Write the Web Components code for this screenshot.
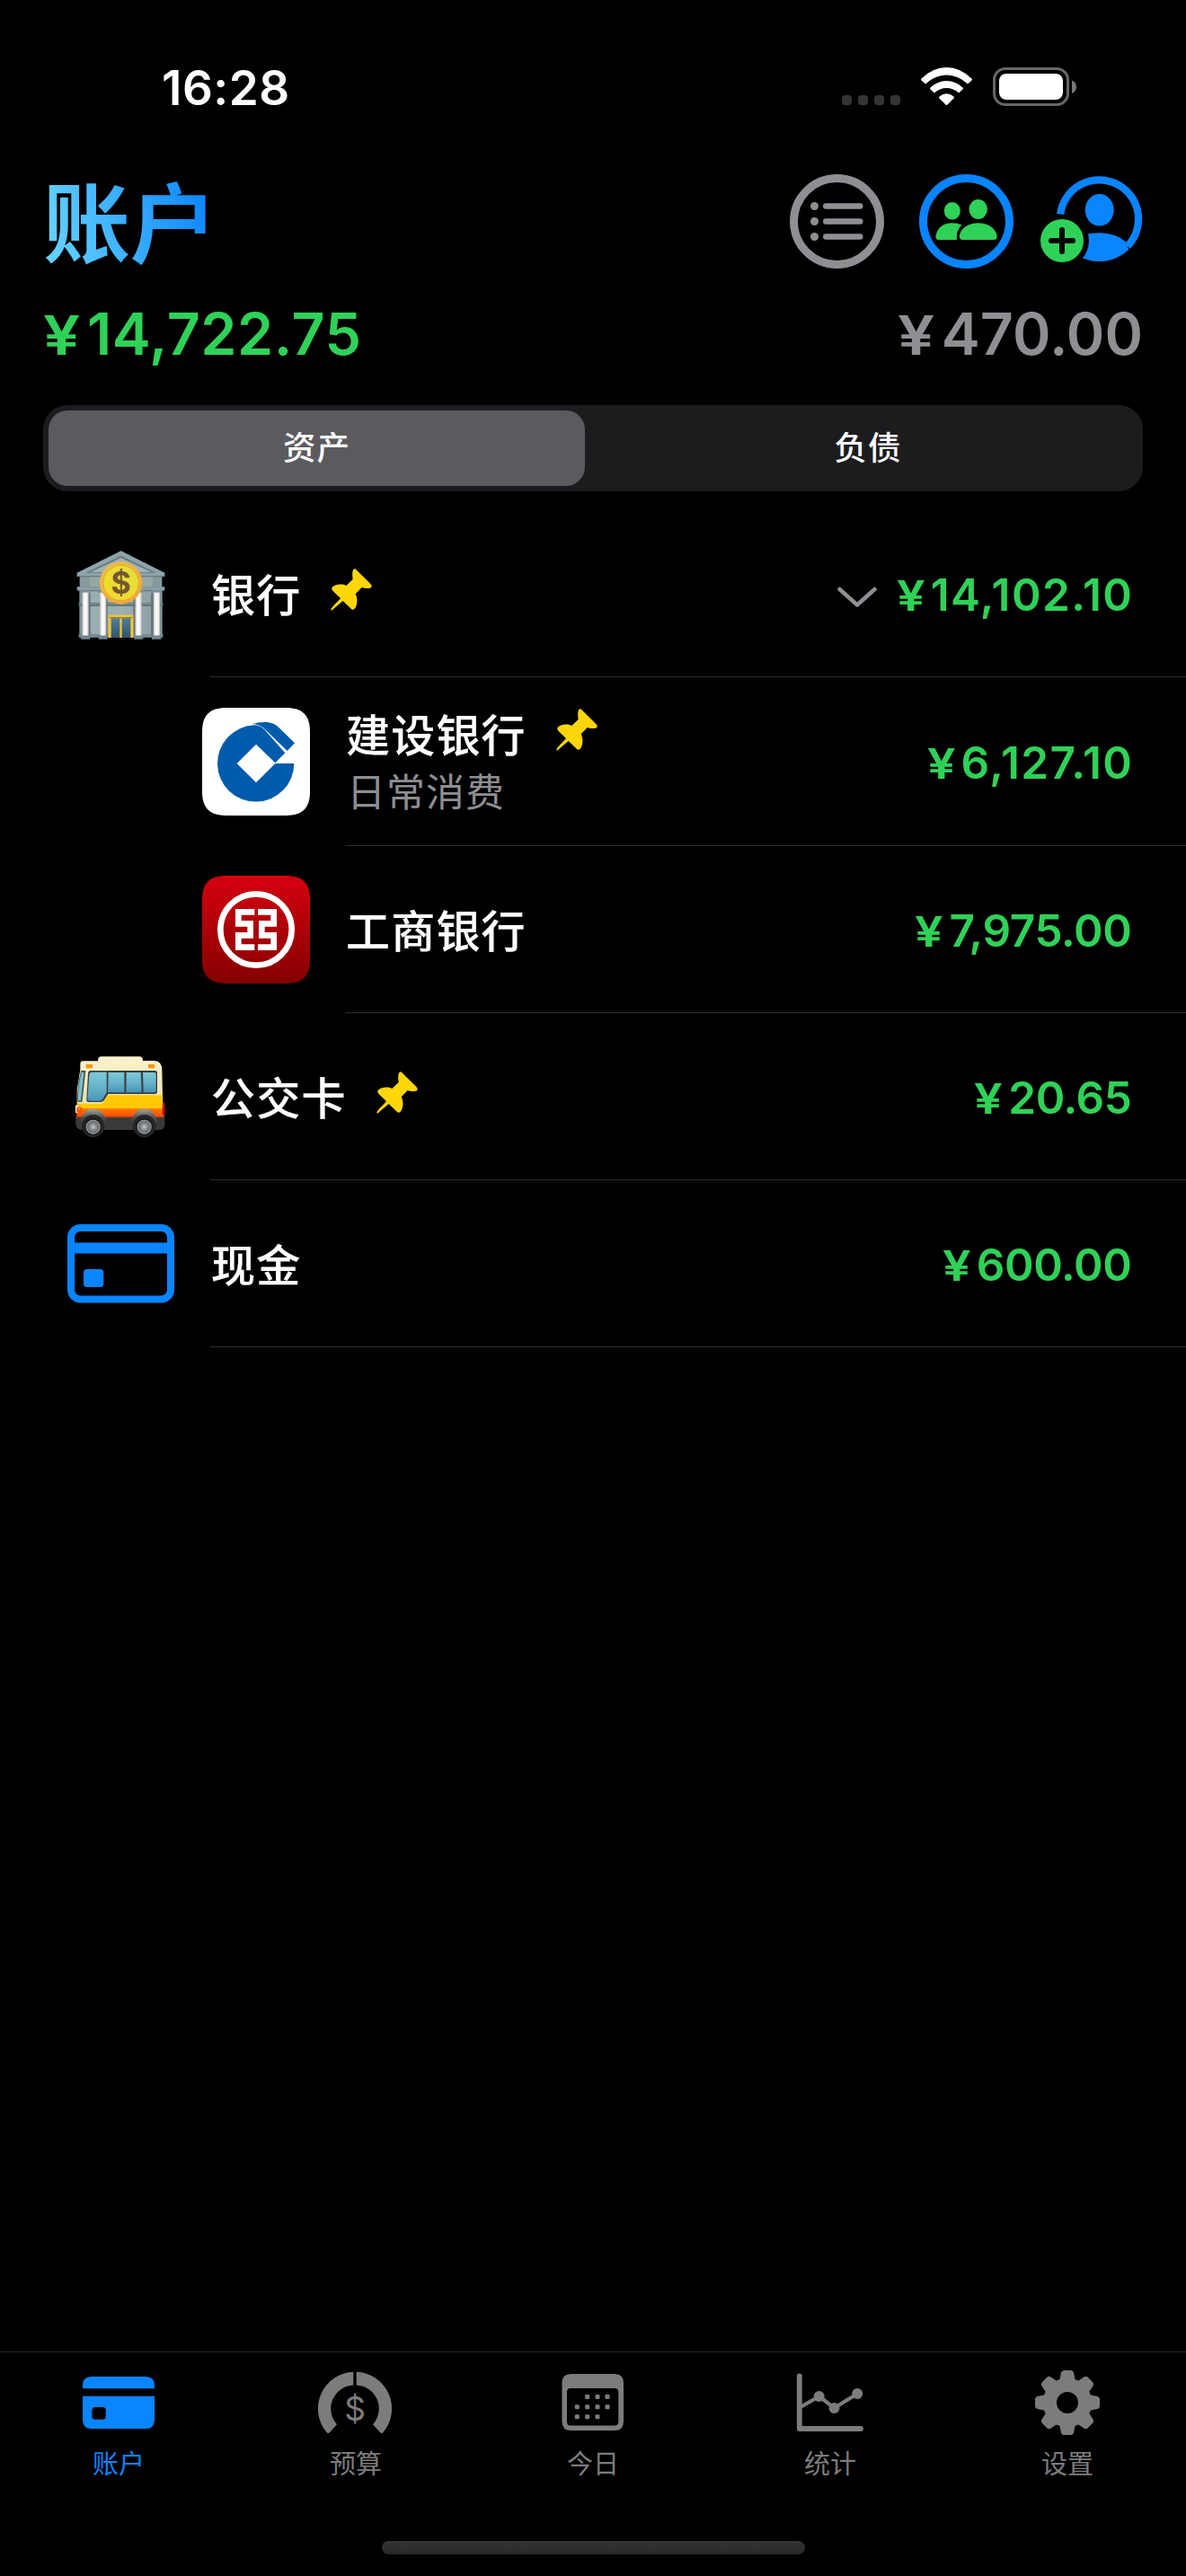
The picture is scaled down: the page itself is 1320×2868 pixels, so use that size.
<!DOCTYPE html>
<html lang="zh-CN">
<head>
<meta charset="utf-8">
<title>账户</title>
<style>
html,body{margin:0;padding:0;background:#000}
body{width:1320px;height:2868px;overflow:hidden;color:#fff;font-family:Inter,"Noto Sans CJK SC",sans-serif}
</style>
</head>
<body>
<wallet-app></wallet-app>
<script>
const define=(name,css,html,ready)=>{
  const t=document.createElement('template');
  t.innerHTML='<style>'+css+'</style>'+html;
  customElements.define(name,class extends HTMLElement{
    constructor(){super();this.attachShadow({mode:'open'}).append(t.content.cloneNode(true));}
    connectedCallback(){if(ready)ready(this,this.shadowRoot);}
  });
};

const PIN='<svg class="pin" width="46" height="47" viewBox="82 69 138 141"><path fill="#ffd60a" d="M161 70C155 72 153 86 156 105L134 126C118 118 95 122 87 132C84 137 87 141 92 146L115 168C110 176 84 198 83 206C84 210 88 208 92 203L123 177L151 204C157 209 163 204 167 195C172 182 171 165 165 154L186 132C197 136 213 137 218 131C221 126 217 122 212 117L170 76C167 72 164 69 161 70Z"/></svg>';

const ART={
bank:`<svg width="120" height="120" viewBox="44 30 360 360">
<defs><linearGradient id="w" x1="0" x2="1"><stop offset="0" stop-color="#7d9193"/><stop offset=".15" stop-color="#9aadaf"/><stop offset=".5" stop-color="#9cb0b3"/><stop offset=".85" stop-color="#8fa3a5"/><stop offset="1" stop-color="#7d9193"/></linearGradient>
<linearGradient id="p" x1="0" x2="1"><stop offset="0" stop-color="#cfcfd0"/><stop offset=".4" stop-color="#fff"/><stop offset=".75" stop-color="#f1f0f0"/><stop offset="1" stop-color="#b9b5b5"/></linearGradient>
<linearGradient id="g" x1="0" y1="0" x2=".6" y2="1"><stop offset="0" stop-color="#f2c13c"/><stop offset="1" stop-color="#f1a63c"/></linearGradient>
<linearGradient id="c" x1="0" x2="1" y1="1" y2="0"><stop offset="0" stop-color="#f2d72c"/><stop offset="1" stop-color="#e3e23b"/></linearGradient>
<linearGradient id="d" x1="0" x2="0" y1="0" y2="1"><stop offset="0" stop-color="#4e7f9d"/><stop offset="1" stop-color="#31536a"/></linearGradient></defs>
<path fill="url(#w)" d="M84 195H361V355H84Z"/><path fill="#647679" d="M82 240H363V252H82Z"/><path fill="#7f9396" d="M84 242H361V246H84Z"/>
<path fill="#748a8e" d="M82 345H182V356H82ZM264 345H363V356H264Z"/>
<path fill="#869a9d" d="M85 153H360V188H85Z"/><path fill="#a3b0a8" d="M118 153H328V186H118Z" opacity=".6"/>
<path fill="#8da4aa" d="M76 140L223 67L369 140V153H76Z"/><path fill="#67797d" d="M76 150H369V154H76ZM106 140L223 83L340 140Z"/><path fill="#a0b4b8" d="M122 138L223 90L324 138Z"/>
<path fill="#8aa0a6" d="M76 187H369V199H76Z"/><path fill="#65787c" d="M80 198H365V202H80Z"/>
<path fill="#7d9398" d="M89 199H120V207H89ZM148 199H178V207H148ZM267 199H297V207H267ZM327 199H358V207H327Z"/>
<path fill="#65777a" d="M113 208H121V350H113ZM171 208H178V350H171ZM264 208H271V350H264ZM323 208H331V350H323Z"/>
<path fill="url(#p)" d="M94 206H115V350H94Z"/><path fill="url(#p)" d="M153 206H174V350H153Z"/><path fill="url(#p)" d="M271 206H292V350H271Z"/><path fill="url(#p)" d="M332 206H353V350H332Z"/>
<path fill="#6f888d" d="M89 350H119V362H89ZM148 350H178V362H148ZM267 350H297V362H267ZM326 350H357V362H326Z"/>
<path fill="#f7c52f" d="M181 281H264V357H181Z"/><path fill="#8d7e2d" d="M184 288H261V292H184Z"/><path fill="url(#d)" d="M190 292H219V357H190ZM226 292H255V357H226Z"/>
<circle cx="223" cy="174" r="71" fill="url(#g)"/><circle cx="223" cy="174" r="59" fill="url(#c)" stroke="#e0ab35" stroke-width="3"/>
<text x="223" y="211" text-anchor="middle" font-family="Inter" font-weight="700" font-size="102" fill="#765632">$</text></svg>`,
ccb:`<svg width="120" height="120" viewBox="0 0 360 360"><path fill="#fff" d="M80 0H280C335 0 360 25 360 80V280C360 335 335 360 280 360H80C25 360 0 335 0 280V80C0 25 25 0 80 0Z"/>
<path fill="#005bac" d="M307 186A128 128 0 1 1 172 58Q194 58 208 73L277 151L244 184L180 122L116 186L180 250L244 186Z"/><path fill="#005bac" d="M168 54Q188 47 215 48Q237 50 252 62L309 118L284 144L212 74Q192 54 168 54Z"/></svg>`,
icbc:`<svg width="120" height="120" viewBox="0 0 360 360"><defs><linearGradient id="r" x1="0" y1="0" x2="0" y2="1"><stop offset="0" stop-color="#d5000f"/><stop offset="1" stop-color="#840000"/></linearGradient></defs><path fill="url(#r)" d="M80 0H280C335 0 360 25 360 80V280C360 335 335 360 280 360H80C25 360 0 335 0 280V80C0 25 25 0 80 0Z"/>
<circle cx="180" cy="180" r="119" fill="none" stroke="#fff" stroke-width="20"/><path fill="none" stroke="#fff" stroke-width="20" d="M175 121H121V160H161V199H121V239H175M186 121H239V160H199V199H239V239H186"/></svg>`,
bus:`<svg width="120" height="120" viewBox="45 65 360 360">
<defs><linearGradient id="y" x1="0" y1="0" x2="0" y2="1"><stop offset="0" stop-color="#fbf3cd"/><stop offset=".5" stop-color="#efe8bf"/><stop offset="1" stop-color="#e8dfae"/></linearGradient>
<linearGradient id="s" x1="0" y1="0" x2="0" y2="1"><stop offset="0" stop-color="#7ccbd8"/><stop offset=".5" stop-color="#68b4c9"/><stop offset="1" stop-color="#4795b7"/></linearGradient>
<linearGradient id="o" x1="0" y1="0" x2="0" y2="1"><stop offset="0" stop-color="#ff7d00"/><stop offset="1" stop-color="#ff4c00"/></linearGradient>
<linearGradient id="a" x1="0" y1="0" x2="0" y2="1"><stop offset="0" stop-color="#a5a5a5"/><stop offset=".4" stop-color="#505050"/><stop offset="1" stop-color="#222"/></linearGradient>
<radialGradient id="h"><stop offset="0" stop-color="#c5c9cd"/><stop offset=".45" stop-color="#85898d"/><stop offset=".8" stop-color="#696d71"/><stop offset="1" stop-color="#b8bbbd"/></radialGradient></defs>
<path fill="#39393c" d="M73 312H370V342Q367 356 350 356H92Q76 353 73 338Z"/>
<path fill="url(#y)" d="M147 126Q147 111 158 111H286Q297 111 297 125H335Q361 126 361 156L364 300H77V220L88 155V136Q88 126 98 126Z"/>
<path fill="#ffca05" d="M78 268H158Q164 266 168 260L178 243Q180 240 186 240H362V288H78Z"/><path fill="url(#o)" d="M76 284H364L368 311H76Z"/><path fill="#a64520" d="M74 310H369V315H74Z"/>
<path fill="#444" d="M91 158H106L94 262H79Q76 210 91 158Z"/><path fill="#75bfcc" d="M92 163H101L90 258H81Q79 212 92 163Z"/>
<path fill="#3d3d40" d="M122 158H338Q345 158 345 165V228Q345 236 337 236H181L169 255Q165 263 157 263H118Q108 263 109 253L114 167Q115 158 122 158Z"/>
<path fill="url(#s)" d="M127 163H176V231L164 252Q160 259 152 259H119Q112 259 112 252L118 172Q120 163 127 163Z"/><path fill="url(#s)" d="M182 164H235V231H180ZM242 164H290L293 231H241ZM297 164H335Q341 164 341 169V225Q341 231 335 231H299Z"/>
<path fill="#ff9500" d="M107 137H129V150H107ZM315 137H336V150H315Z"/><path fill="#d10a16" d="M363 264Q370 263 370 271V304H361Z"/>
<rect x="72" y="273" width="8" height="27" rx="4" fill="#fff"/><circle cx="85" cy="289" r="10" fill="#ff5000"/><circle cx="85" cy="286" r="4" fill="#ff9c38"/>
<path fill="url(#a)" d="M89 325Q99 286 131 286Q165 286 174 325L166 356H95ZM260 325Q269 286 302 286Q333 286 344 325L338 356H266Z"/>
<circle cx="131" cy="343" r="38" fill="#252525"/><circle cx="131" cy="345" r="28" fill="#171719"/><circle cx="131" cy="346" r="24" fill="url(#h)"/>
<circle cx="302" cy="343" r="38" fill="#252525"/><circle cx="302" cy="345" r="28" fill="#171719"/><circle cx="302" cy="346" r="24" fill="url(#h)"/></svg>`,
card:`<svg width="120" height="88" viewBox="75 1363 120 88"><rect x="79" y="1367" width="111" height="79.5" rx="10.5" fill="none" stroke="#0a84ff" stroke-width="8"/><path fill="#0a84ff" d="M79 1383.5H190V1395.5H79Z"/><rect x="93" y="1413" width="22.3" height="20" rx="4" fill="#0a84ff"/></svg>`
};

define('status-bar',`
:host{display:flex;height:150px;box-sizing:border-box;padding:0 120px 0 180px;justify-content:space-between}
time{font-size:53px;line-height:60px;font-weight:600;letter-spacing:.5px;margin-top:68px}
svg{display:block;margin-top:70px}`,
`<time>16:28</time><svg width="264" height="54" viewBox="936 70 264 54">
<g fill="#343434"><rect x="937" y="106" width="11" height="11" rx="3.5"/><rect x="955" y="106" width="11" height="11" rx="3.5"/><rect x="973" y="106" width="11" height="11" rx="3.5"/><rect x="991" y="106" width="11" height="11" rx="3.5"/></g>
<g fill="#fff"><path d="M1025.5 87.5Q1038.500 75 1053.500 75T1081.500 87.500Q1082.500 88.500 1081.500 89.500L1077 93.500Q1066 83.500 1053.500 83.500T1030 93.500L1025.500 89.500Q1024.500 88.500 1025.500 87.500Z"/><path d="M1035.500 97.500Q1043.500 90 1053.500 90T1071.500 97.500Q1072.500 98.500 1071.500 99.500L1067 103.500Q1061 98 1053.500 98T1040 103.500L1035.500 99.500Q1034.500 98.500 1035.500 97.500Z"/><path d="M1045.500 107.500Q1053.500 101 1061.500 107.500Q1062.500 108.500 1061.500 109.500L1054.500 116.500Q1053.500 117.500 1052.500 116.500L1045.500 109.500Q1044.500 108.500 1045.500 107.500Z"/></g>
<rect x="1106.500" y="76.500" width="82" height="40" rx="12.500" fill="none" stroke="#666" stroke-width="3"/><rect x="1112" y="82" width="71" height="29" rx="8" fill="#fff"/><path fill="#777" d="M1193 89.500Q1198 91.500 1198 96.800T1193 104Z"/></svg>`);

define('app-header',`
:host{display:flex;height:180px;padding:0 48px;justify-content:space-between}
h1{margin:23px 0 0;font:700 97px/140px "Noto Sans CJK SC",sans-serif;letter-spacing:-.5px;height:140px;
background:linear-gradient(75deg,#64d2ff 8%,#0a84ff 92%);-webkit-background-clip:text;background-clip:text;color:transparent}
svg{display:block;margin-top:40px}`,
`<h1><slot></slot></h1><svg width="396" height="112" viewBox="876 190 396 112">
<circle cx="931.500" cy="246.500" r="48" fill="none" stroke="#8e8e93" stroke-width="9"/>
<g fill="#8e8e93"><circle cx="906.500" cy="229.500" r="4.500"/><circle cx="906.500" cy="246.500" r="4.500"/><circle cx="906.500" cy="263.500" r="4.500"/><rect x="916" y="226.300" width="44.500" height="6.500" rx="3.200"/><rect x="916" y="243.300" width="44.500" height="6.500" rx="3.200"/><rect x="916" y="260.300" width="44.500" height="6.500" rx="3.200"/></g>
<circle cx="1075.500" cy="246.500" r="48" fill="none" stroke="#0a84ff" stroke-width="9"/>
<g fill="#30d158"><ellipse cx="1059.800" cy="234.800" rx="9" ry="9.800"/><ellipse cx="1088.700" cy="233" rx="10.200" ry="11"/><path d="M1045 267Q1041 267 1041.500 262.500Q1044.500 248.500 1059.500 248.200Q1065.500 248.300 1070.500 250.500Q1063.500 257 1065 267Z"/><path d="M1071.500 267Q1067.500 267 1067.700 263C1069 254 1078 248.200 1088.700 248.200S1108.500 254 1109.700 263Q1110 267 1105.500 267Z"/></g>
<defs><mask id="m"><path fill="#fff" d="M1150 180H1280V310H1150Z"/><circle cx="1182" cy="268" r="30"/></mask><clipPath id="k"><circle cx="1223.500" cy="243.500" r="47.500"/></clipPath></defs>
<path fill="none" stroke="#0a84ff" stroke-width="8.200" d="M1180.200 238.500A43.600 43.600 0 1 1 1255 274"/><g mask="url(#m)"><ellipse cx="1223.700" cy="233.800" rx="16" ry="17.800" fill="#0a84ff"/><path clip-path="url(#k)" fill="#0a84ff" d="M1190 300V268Q1205 259.300 1223.500 259.300T1254 270L1262 300Z"/></g>
<circle cx="1182" cy="268" r="24" fill="#30d158"/><path stroke="#000" stroke-width="6" stroke-linecap="round" d="M1170 268H1194M1182 256V280"/></svg>`);

define('money-text',`
:host{display:inline-flex;align-items:baseline;font-weight:600;white-space:nowrap}
span{font-size:.945em;margin-right:var(--yen-gap,.24em);letter-spacing:0;transform:scaleX(1.2);transform-origin:0 50%}
b{font-weight:inherit;letter-spacing:var(--track,0);margin-right:calc(var(--track,0px) * -1)}`,
`<span>¥</span><b><slot></slot></b>`);

define('total-line',`
:host{display:flex;justify-content:space-between;height:121px;padding:0 48px;font-size:64.500px;line-height:84px}
money-text{color:#30d158;--track:.5px}money-text+money-text{color:#8e8e93;--track:.1px}`,
`<money-text>14,722.75</money-text><money-text>470.00</money-text>`);

define('segment-control',`
:host{display:flex;margin:0 48px;height:96px;box-sizing:border-box;padding:6px;background:#1c1c1e;border-radius:27px;font:500 36.500px/80px "Noto Sans CJK SC",sans-serif;text-align:center}
div{flex:1;letter-spacing:1px}.on{flex:0 0 597px;background:#5b5a5f;border-radius:21px}`,
`<div class="on">资产</div><div style="padding-left:15px">负债</div>`);

define('account-row',`
:host{display:flex;height:186px;padding-left:75px;align-items:stretch}
:host([nested]){padding-left:225px}:host([tall]){height:188px}
.icon{width:120px;margin-right:39px;display:flex;align-items:center;justify-content:center}
.body{flex:1;display:flex;align-items:center;border-bottom:1px solid #2c2c2e;padding-right:60px}
.name{flex:1;display:flex;flex-direction:column}
.line{display:flex;align-items:center;gap:33px;font-size:49px;font-weight:500;height:62px;line-height:62px;letter-spacing:1.200px;font-family:"Noto Sans CJK SC",sans-serif;-webkit-text-stroke:.2px currentColor}
.line span{margin:-2px 0 0 1px}
.pin{margin-top:-8px}
.sub{font:400 43px/62px "Noto Sans CJK SC",sans-serif;letter-spacing:1px;color:#8e8e93;margin-left:2px}
.chev{margin-right:22px;margin-top:9px}
money-text{color:#30d158;font-size:49.500px;line-height:60px;margin-top:3px;--yen-gap:.25em}`,
`<div class="icon"></div><div class="body"><div class="name"><div class="line"><span><slot></slot></span></div></div></div>`,
(el,root)=>{
  if(el.done)return;el.done=true;
  root.querySelector('.icon').innerHTML=ART[el.getAttribute('icon')];
  if(el.hasAttribute('pinned'))root.querySelector('.line').insertAdjacentHTML('beforeend',PIN);
  if(el.hasAttribute('note'))root.querySelector('.name').insertAdjacentHTML('beforeend','<div class="sub">'+el.getAttribute('note')+'</div>');
  if(el.hasAttribute('open'))root.querySelector('.body').insertAdjacentHTML('beforeend','<svg class="chev" width="44" height="25" viewBox="0 0 44 25"><path d="M2.500 3L22 20.500L41.500 3" fill="none" stroke="#8e8e93" stroke-width="4.500" stroke-linecap="round" stroke-linejoin="round"/></svg>');
  root.querySelector('.body').insertAdjacentHTML('beforeend','<money-text style="--track:'+el.getAttribute('track')+'">'+el.getAttribute('amount')+'</money-text>');
});

define('tab-item',`
:host{display:flex;flex-direction:column;align-items:center;flex:1;color:#7c7c7c}
:host([active]){color:#0a84ff}
svg{display:block;margin-top:15px}
div{font:400 29px/40px "Noto Sans CJK SC",sans-serif;margin-top:3px}`,
`<svg width="100" height="84" fill="currentColor"></svg><div><slot></slot></div>`,
(el,root)=>{
  const s=root.querySelector('svg');
  const cog=[];
  for(let i=0;i<8;i++)cog.push('<path d="M-12 -24L-8.500 -26L-7 -33.500Q-6.300 -36 -3.800 -36H3.800Q6.300 -36 7 -33.500L8.500 -26L12 -24Z" transform="translate(1188 2675) rotate('+i*45+')"/>');
  const x=+el.getAttribute('origin');
  s.setAttribute('viewBox',x+' 2634 100 84');
  s.innerHTML={
   card:'<path fill-rule="evenodd" d="M92 2659.300V2656Q92 2646 102 2646H162Q172 2646 172 2656V2659.300ZM92 2667.700H172V2694Q172 2704 162 2704H102Q92 2704 92 2694ZM106 2680Q102.300 2680 102.300 2683.500V2690.200Q102.300 2693.700 106 2693.700H114.200Q117.800 2693.700 117.800 2690.200V2683.500Q117.800 2680 114.200 2680Z"/>',
   gauge:'<path d="M393.300 2640.700A41 41 0 0 0 363.500 2708Q365.300 2709.800 367 2708L375 2699.300A26.300 26.300 0 0 1 393.300 2655.400ZM396.700 2640.700A41 41 0 0 1 426.500 2708Q424.700 2709.800 423 2708L415 2699.300A26.300 26.300 0 0 0 396.700 2655.400Z"/><text x="395" y="2694.500" text-anchor="middle" font-family="Inter" font-size="37" font-weight="400">$</text>',
   calendar:'<path fill-rule="evenodd" d="M635.500 2643H684Q694 2643 694 2653V2696Q694 2706 684 2706H635.500Q625.500 2706 625.500 2696V2653Q625.500 2643 635.500 2643ZM635 2659Q631 2659 631 2663V2696Q631 2700.500 635 2700.500H684Q688.300 2700.500 688.300 2696V2663Q688.300 2659 684 2659Z"/>'+[[653.600,2668.500],[665,2668.500],[676,2668.500],[642.300,2679.700],[653.600,2679.700],[665,2679.700],[676,2679.700],[642.300,2690.700],[653.600,2690.700],[665,2690.700]].map(p=>'<rect x="'+(p[0]-2.500)+'" y="'+(p[1]-2.500)+'" width="5" height="5" rx="1.200"/>').join(''),
   chart:'<path fill="none" stroke="currentColor" stroke-width="5.800" stroke-linecap="round" stroke-linejoin="round" d="M889.800 2645.500V2704H958"/><path fill="none" stroke="currentColor" stroke-width="4.200" d="M890 2680.500L911.700 2668L928.500 2681L954.200 2665"/><circle cx="911.700" cy="2668" r="6"/><circle cx="928.500" cy="2681" r="6"/><circle cx="954.200" cy="2665" r="6"/>',
   gear:'<circle cx="1188" cy="2675" r="19" fill="none" stroke="currentColor" stroke-width="14"/>'+cog.join('')
  }[el.getAttribute('icon')];
});

define('tab-bar',`
:host{display:flex;flex-direction:column;height:250px;box-sizing:border-box;border-top:1px solid #242426}
nav{display:flex;width:1320px;height:210px}
i{display:block;width:471px;height:15px;margin:0 auto;border-radius:8px;background:linear-gradient(#353535,#282828)}`,
`<nav><tab-item active icon="card" origin="82">账户</tab-item><tab-item icon="gauge" origin="346">预算</tab-item><tab-item icon="calendar" origin="610">今日</tab-item><tab-item icon="chart" origin="874">统计</tab-item><tab-item icon="gear" origin="1138">设置</tab-item></nav><i></i>`);

define('wallet-app',`
:host{display:flex;flex-direction:column;width:1320px;height:2868px;background:#000}
main{flex:1;padding-top:21px}`,
`<status-bar></status-bar><app-header>账户</app-header><total-line></total-line><segment-control></segment-control>
<main>
<account-row icon="bank" amount="14,102.10" track="1.4px" pinned open>银行</account-row>
<account-row icon="ccb" amount="6,127.10" track="1.4px" nested tall pinned note="日常消费">建设银行</account-row>
<account-row icon="icbc" amount="7,975.00" track="-.35px" nested>工商银行</account-row>
<account-row icon="bus" amount="20.65" track="-.4px" pinned>公交卡</account-row>
<account-row icon="card" amount="600.00" track="-.4px">现金</account-row>
</main>
<tab-bar></tab-bar>`);
</script>
</body>
</html>
